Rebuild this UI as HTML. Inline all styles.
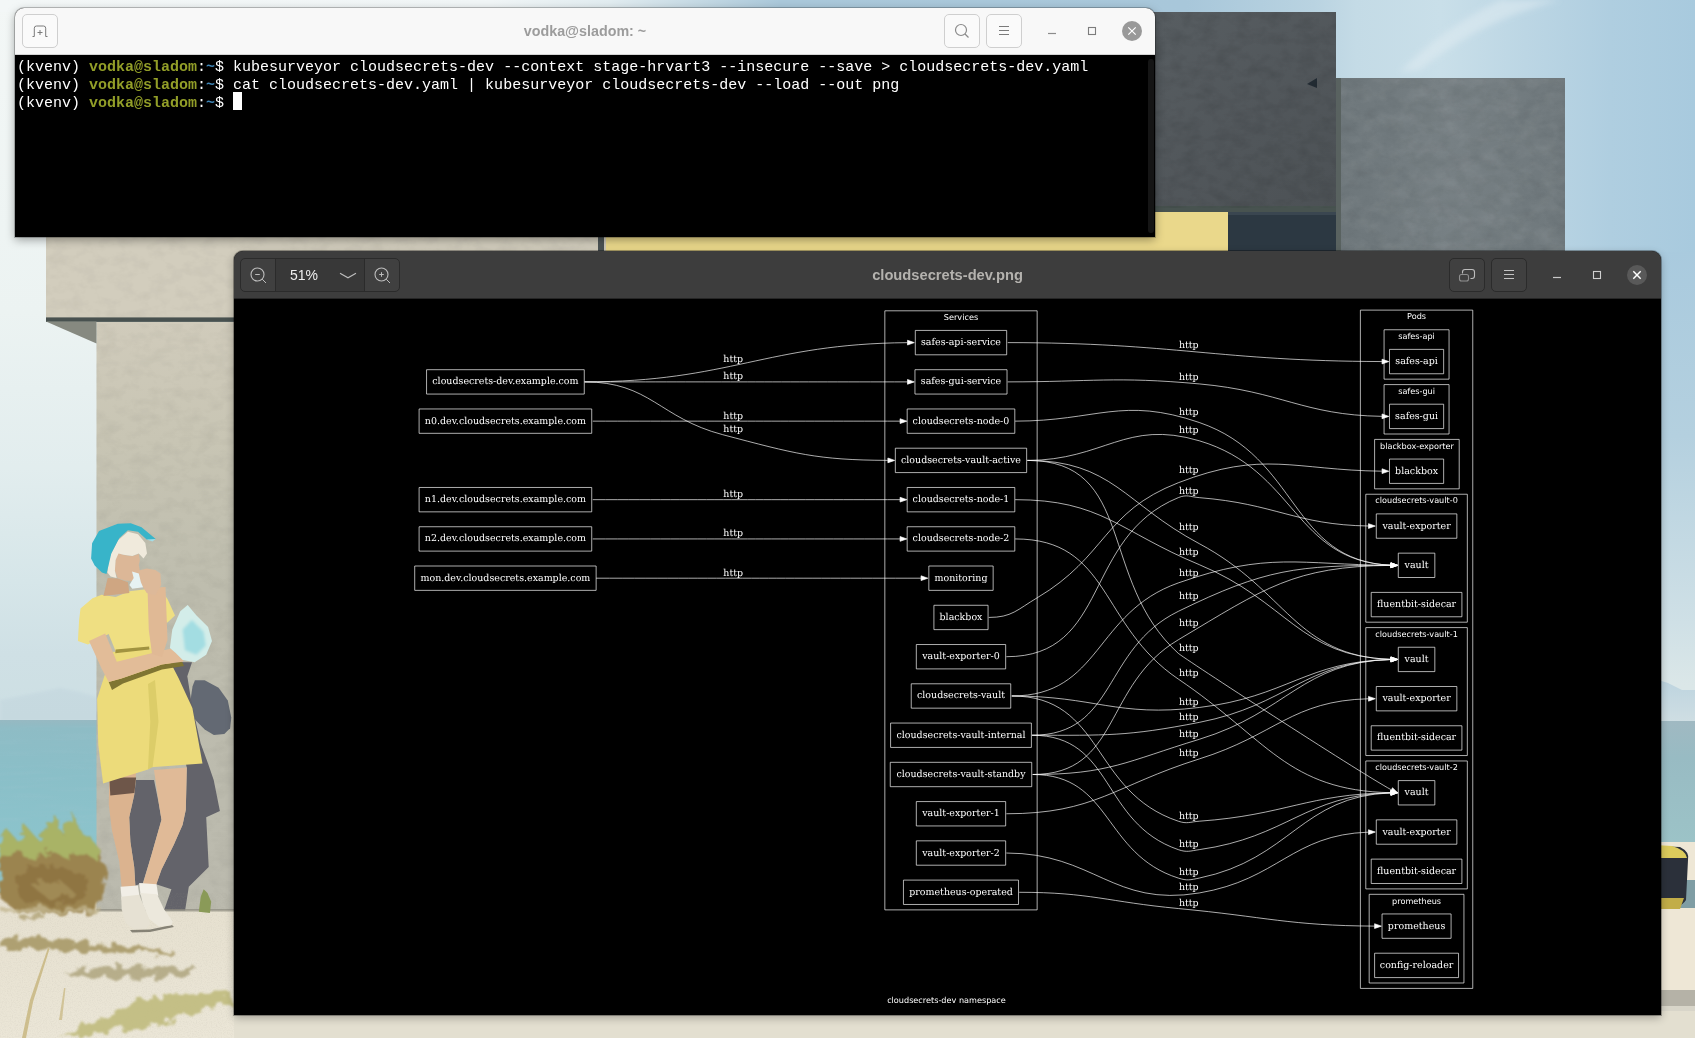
<!DOCTYPE html>
<html lang="en">
<head>
<meta charset="utf-8">
<title>Desktop</title>
<style>
html,body{margin:0;padding:0;}
body{width:1695px;height:1038px;overflow:hidden;position:relative;background:#dfeaee;font-family:"Liberation Sans",sans-serif;}
#wall{position:absolute;left:0;top:0;width:1695px;height:1038px;}
.win{position:absolute;box-sizing:border-box;}
.title,pre,.pct,#graph{will-change:transform;}
/* terminal */
#term{left:15px;top:8px;width:1140px;height:229px;border-radius:9px 9px 0 0;box-shadow:0 0 0 1px rgba(0,0,0,.22),0 3px 10px rgba(0,0,0,.35);background:#000;}
#term .hdr{position:absolute;left:0;top:0;width:100%;height:47px;background:#f8f8f8;border-radius:9px 9px 0 0;border-bottom:1px solid #d4d4d4;box-sizing:border-box;}
#term .title{position:absolute;left:0;right:0;top:15px;text-align:center;font-weight:bold;font-size:14.3px;color:#9c9c9c;}
.tbtn{position:absolute;top:6px;width:36px;height:34px;box-sizing:border-box;border:1px solid #cfcfcf;border-radius:5px;background:#fafafa;}
#term .body{position:absolute;left:1px;top:47px;right:0;bottom:0;background:#000;}
#term pre{margin:0;position:absolute;left:1px;top:4px;font-family:"Liberation Mono",monospace;font-size:15px;line-height:18px;color:#fff;letter-spacing:0px;white-space:pre;}
.sb{position:absolute;right:1px;top:4px;width:6px;bottom:4px;background:#151515;border-radius:3px;}
.u{color:#929e28;font-weight:bold;}
.p{color:#3f86b7;font-weight:bold;}
.cur{display:inline-block;width:9px;height:17.500px;background:#fff;vertical-align:top;position:relative;top:-3px;}
/* viewer */
#view{left:234px;top:251px;width:1427px;height:764px;border-radius:9px 9px 0 0;background:#000;box-shadow:0 0 0 1px rgba(0,0,0,.3),0 3px 9px rgba(0,0,0,.28);}
#view .hdr{position:absolute;left:0;top:0;width:100%;height:48px;background:#3d3d3d;border-radius:9px 9px 0 0;border-bottom:1px solid #262626;box-sizing:border-box;}
#view .title{position:absolute;left:0;right:0;top:16px;text-align:center;font-weight:bold;font-size:14.7px;color:#b4b2ae;}
.vbtn{position:absolute;top:7px;width:36px;height:34px;box-sizing:border-box;border:1px solid #2b2b2b;border-radius:5px;background:#404040;}
#zoomgrp{position:absolute;left:6px;top:7px;width:160px;height:34px;box-sizing:border-box;border:1px solid #2b2b2b;border-radius:5px;background:#404040;}
#zoomgrp .mid{position:absolute;left:34px;top:0;width:90px;height:32px;background:#383838;border-left:1px solid #2b2b2b;border-right:1px solid #2b2b2b;box-sizing:border-box;}
#zoomgrp .pct{position:absolute;left:14px;top:8px;font-size:14px;color:#eeeeee;}
#graph{position:absolute;left:0;top:47px;}
svg{display:block;}
</style>
</head>
<body>
<svg id="wall" width="1695" height="1038" viewBox="0 0 1695 1038">
<defs>
<linearGradient id="skyL" gradientUnits="userSpaceOnUse" x1="0" y1="0" x2="0" y2="1038"><stop offset="0" stop-color="#f3f7f6"/><stop offset=".3" stop-color="#ecf3f2"/><stop offset=".45" stop-color="#e2edee"/><stop offset=".56" stop-color="#d6e6e9"/><stop offset=".63" stop-color="#cfe0e5"/><stop offset=".69" stop-color="#cddfe3"/></linearGradient>
<linearGradient id="skyTop" x1="0" y1="0" x2="1" y2="0"><stop offset="0" stop-color="#f3f7f7"/><stop offset=".29" stop-color="#f0f5f6"/><stop offset=".36" stop-color="#e1ecf0"/><stop offset=".415" stop-color="#c3d8e3"/><stop offset=".46" stop-color="#aac8da"/><stop offset=".7" stop-color="#a8c7da"/><stop offset=".775" stop-color="#b9d3e1"/><stop offset=".8" stop-color="#c4dbe6"/><stop offset=".85" stop-color="#c9dfe9"/><stop offset=".9" stop-color="#bcd6e4"/><stop offset=".95" stop-color="#afcee0"/><stop offset="1" stop-color="#a8cade"/></linearGradient>
<linearGradient id="skyR" gradientUnits="userSpaceOnUse" x1="0" y1="0" x2="0" y2="1038"><stop offset="0" stop-color="#b6d3e2"/><stop offset=".24" stop-color="#a9cade"/><stop offset=".42" stop-color="#b4d0df"/><stop offset=".6" stop-color="#cfe0e6"/><stop offset=".66" stop-color="#dbe7e8"/></linearGradient>
<linearGradient id="seaL" gradientUnits="userSpaceOnUse" x1="0" y1="720" x2="0" y2="860"><stop offset="0" stop-color="#97b9c2"/><stop offset=".06" stop-color="#8ebcc5"/><stop offset=".4" stop-color="#8abfc8"/><stop offset="1" stop-color="#8cc5cd"/></linearGradient>
<linearGradient id="seaR" gradientUnits="userSpaceOnUse" x1="0" y1="721" x2="0" y2="843"><stop offset="0" stop-color="#a0b9c2"/><stop offset=".3" stop-color="#98bbc3"/><stop offset="1" stop-color="#9cc3c7"/></linearGradient>
<linearGradient id="mtn" gradientUnits="userSpaceOnUse" x1="0" y1="680" x2="0" y2="722"><stop offset="0" stop-color="#bdd4df"/><stop offset="1" stop-color="#cfdee3"/></linearGradient>
<linearGradient id="pil" x1="0" y1="0" x2="0" y2="1"><stop offset="0" stop-color="#d0cbbb"/><stop offset=".2" stop-color="#c8c5b4"/><stop offset=".45" stop-color="#bebdae"/><stop offset="1" stop-color="#bbbaae"/></linearGradient>
<linearGradient id="dk1" x1="0" y1="0" x2="1" y2="1"><stop offset="0" stop-color="#595f63"/><stop offset="1" stop-color="#4c5155"/></linearGradient>
<linearGradient id="dk2" x1="0" y1="0" x2="1" y2="0"><stop offset="0" stop-color="#6d767a"/><stop offset=".5" stop-color="#778084"/><stop offset="1" stop-color="#6f787c"/></linearGradient>
<linearGradient id="gnd" x1="0" y1="0" x2="0" y2="1"><stop offset="0" stop-color="#e6e0cf"/><stop offset="1" stop-color="#ebe6d7"/></linearGradient>
<filter id="b1" x="-10%" y="-10%" width="120%" height="120%"><feGaussianBlur stdDeviation=".7"/></filter>
<filter id="b2" x="-10%" y="-10%" width="120%" height="120%"><feGaussianBlur stdDeviation="1.6"/></filter>
<filter id="b3" x="-20%" y="-20%" width="140%" height="140%"><feGaussianBlur stdDeviation="3"/></filter>
<filter id="rough" x="-10%" y="-10%" width="120%" height="120%"><feTurbulence type="fractalNoise" baseFrequency=".09" numOctaves="3" seed="4" result="n"/><feDisplacementMap in="SourceGraphic" in2="n" scale="16"/><feGaussianBlur stdDeviation=".8"/></filter>
<filter id="mottle" x="0" y="0" width="100%" height="100%"><feTurbulence type="fractalNoise" baseFrequency=".06 .09" numOctaves="4" seed="11"/><feColorMatrix type="matrix" values="0 0 0 0 0  0 0 0 0 0  0 0 0 0 0  0 0 0 1.4 -.55"/></filter>
<filter id="mottleL" x="0" y="0" width="100%" height="100%"><feTurbulence type="fractalNoise" baseFrequency=".05 .07" numOctaves="4" seed="5"/><feColorMatrix type="matrix" values="0 0 0 0 1  0 0 0 0 1  0 0 0 0 1  0 0 0 1.4 -.55"/></filter>
<filter id="grain" x="0" y="0" width="100%" height="100%"><feTurbulence type="fractalNoise" baseFrequency=".8" numOctaves="2" seed="7"/><feColorMatrix type="matrix" values="0 0 0 0 .35  0 0 0 0 .33  0 0 0 0 .28  0 0 0 .9 -.38"/></filter>
<filter id="waves" x="0" y="0" width="100%" height="100%"><feTurbulence type="fractalNoise" baseFrequency=".02 .22" numOctaves="2" seed="3"/><feColorMatrix type="matrix" values="0 0 0 0 .36  0 0 0 0 .56  0 0 0 0 .63  0 0 0 1.2 -.5"/></filter>
</defs>
<!-- sky -->
<rect x="0" y="0" width="1695" height="1038" fill="url(#skyTop)"/>
<rect x="0" y="12" width="600" height="1026" fill="url(#skyL)"/>
<rect x="1650" y="252" width="45" height="786" fill="url(#skyR)"/>
<path d="M1420 70 Q1480 20 1560 0 L1500 0 Q1440 30 1400 72Z" fill="#e0ecf2" opacity=".55" filter="url(#b3)"/>
<!-- distant hills left -->
<path d="M0 700 L30 694 L60 688 L80 692 L100 698 L100 722 L0 722Z" fill="#bfd3dc" opacity=".45" filter="url(#b2)"/>
<!-- hills right -->
<path d="M1655 679 L1668 683 L1682 690 L1695 690 L1695 722 L1655 722Z" fill="url(#mtn)" filter="url(#b1)"/>
<!-- sea -->
<rect x="0" y="720" width="300" height="200" fill="url(#seaL)"/>
<rect x="0" y="726" width="110" height="130" filter="url(#waves)" opacity=".3"/>
<rect x="1655" y="726" width="40" height="116" filter="url(#waves)" opacity=".25"/>
<rect x="1566" y="721" width="129" height="122" fill="url(#seaR)"/>
<!-- ground -->
<rect x="0" y="893" width="1695" height="145" fill="url(#gnd)"/>
<rect x="1566" y="842" width="129" height="196" fill="#eee7d6"/>
<rect x="1680" y="880" width="15" height="28" fill="#7f9da4"/>
<rect x="1655" y="990" width="40" height="16" fill="#b5b2a7"/>
<rect x="1655" y="1006" width="40" height="32" fill="#d8d5c9"/>
<rect x="234" y="1011" width="1461" height="27" fill="#e3dfd0"/>
<!-- bench thing right -->
<path d="M1655 846 L1680 847 Q1690 852 1688 860 L1686 900 Q1680 910 1655 909Z" fill="#2b303a"/>
<path d="M1655 845 L1672 846 Q1686 850 1687 858 L1655 858Z" fill="#dccb5c"/>
<path d="M1655 898 L1684 898 L1680 909 L1655 909Z" fill="#c2ad48"/>
<!-- upper-right blocks -->
<rect x="1100" y="12" width="236" height="200" fill="url(#dk1)"/>
<rect x="1100" y="206" width="240" height="6" fill="#485350"/>
<rect x="1336" y="78" width="229" height="200" fill="url(#dk2)"/>
<rect x="1336" y="78" width="5" height="200" fill="#596260"/>
<polygon points="1307,84 1317,78 1317,88" fill="#232c34"/>
<rect x="1155" y="12" width="181" height="196" filter="url(#mottle)" opacity=".13"/>
<rect x="1341" y="79" width="224" height="175" filter="url(#mottleL)" opacity=".09"/>
<rect x="1341" y="79" width="224" height="175" filter="url(#mottle)" opacity=".08"/>
<rect x="600" y="212" width="628" height="60" fill="#ead88b"/>
<rect x="1228" y="212" width="108" height="60" fill="#2c3842"/>
<rect x="1228" y="212" width="108" height="3" fill="#3a4650"/>
<!-- left concrete -->
<rect x="46" y="200" width="560" height="118" fill="#d2cdbd"/>
<rect x="598" y="200" width="6" height="70" fill="#4d5557"/>
<rect x="96.500" y="322" width="200" height="588" fill="url(#pil)"/>
<rect x="46" y="317.400" width="260" height="4.500" fill="#48514f"/>
<polygon points="46,321.500 96.500,321.500 96.500,343.500" fill="#868980"/>
<rect x="96.500" y="324" width="140" height="586" filter="url(#mottle)" opacity=".06"/>
<rect x="46" y="237" width="560" height="80" filter="url(#mottle)" opacity=".05"/>
<!-- wall shadows -->
<g filter="url(#b1)">
<path d="M194.900 680.200 L204.700 680.200 L218.600 687.700 L227.800 700.500 L231.300 717.800 L230.100 728.200 L224.300 734 L213.900 735.100 L204.700 729.400 L195.400 720.100 L191.400 708.600 L190.800 698.200 L192.500 686.600Z" fill="#636973"/>
<path d="M170 662 L192 662.300 L187.300 676.200 L190.800 698.200 L195.400 720.100 L200.600 743.200 L208.200 764 L213.700 780 L219.900 811.100 L206.200 817.300 L208.700 867 L188.800 886.800 L185.100 910.400 L164 910.400 L171.400 889.300 L156 884.300 L161.500 869.400 L173.900 844.600 L182.600 824.700 L185.800 809.800 L186.800 767.600 L180 740 L170 700Z" fill="#63636a"/>
<path d="M136.100 780 L154 780 L159 804.800 L161.500 819.800 L151.600 854.500 L142.900 883.100 L135.400 885.600 L134.200 867 L130.400 842.100 L129.200 817.300 L134.200 794.900Z" fill="#63636a"/>
</g>
<rect x="96.500" y="909" width="140" height="2.500" fill="#8e8c80" opacity=".7" filter="url(#b1)"/>
<path d="M130 930 L150 929.500 L172 925 L174 927 L150 932 L132 932.500Z" fill="#5d5a50" opacity=".7" filter="url(#b1)"/>
<!-- ground texture -->
<rect x="0" y="893" width="234" height="145" filter="url(#grain)" opacity=".28"/>
<!-- bush -->
<g filter="url(#rough)">
<path d="M0 842 L8 830 L16 840 L26 826 L36 838 L46 828 L56 816 L62 834 L72 812 L80 832 L90 836 L99 850 L105 870 L102 900 L84 914 L18 912 L0 898Z" fill="#9b8450"/>
<path d="M0 842 L8 830 L16 840 L26 826 L36 838 L46 828 L56 816 L62 834 L72 812 L80 832 L90 836 L99 850 L98 862 L84 852 L70 860 L52 850 L36 860 L18 852 L0 862Z" fill="#a9b366"/>
<path d="M14 876 L40 864 L66 870 L88 878 L84 900 L50 906 L22 900Z" fill="#8f7443"/>
<path d="M30 884 L60 880 L74 892 L50 900Z" fill="#a08a55"/>
</g>
<!-- ground vegetation -->
<g filter="url(#rough)">
<path d="M0 939 L40 937 L80 943 L120 946 L174 951 L172 955 L100 952 L40 949 L0 949Z" fill="#a59560" opacity=".85"/>
<path d="M20 916 L45 915 L44 918 L20 919Z" fill="#a89868" opacity=".7"/>
<path d="M62 971 L120 966 L197 968 L190 976 L120 979 L80 977Z" fill="#aea47e" opacity=".85"/>
<path d="M128 1004 L165 996 L231 992 L232 1004 L190 1014 L150 1026 L60 1038 L90 1024Z" fill="#bdb978" opacity=".85"/>
<path d="M0 907 L40 909 L100 907 L100 911 L40 913 L0 912Z" fill="#c3b790" opacity=".8"/>
</g>
<path d="M22 1038 L30 1000 L48 948 L49.500 949 L33 1002 L26 1038Z" fill="#c2ae70" opacity=".7" filter="url(#b1)"/>
<path d="M59 1020 L64 988 L65.500 988 L62 1020Z" fill="#c2ae70" opacity=".6" filter="url(#b1)"/>
<path d="M198.800 911.700 L200.700 896.800 L203.700 889.300 L207.500 893 L211.200 901.700 L209.900 912.900Z" fill="#8a9a58" filter="url(#b1)"/>
<!-- person -->
<g filter="url(#b1)">
<path d="M109.300 772.500 L136.100 772.500 L134.200 794.900 L129.200 817.300 L130.400 842.100 L134.200 867 L135.400 886.800 L121.700 888.100 L119.300 862 L111.800 829.700 L108.800 804.800Z" fill="#dbb38f"/>
<path d="M154 770.100 L186.800 767.600 L185.800 809.800 L182.600 824.700 L173.900 844.600 L161.500 869.400 L156 885.600 L142.900 883.900 L151.600 854.500 L161.500 819.800 L159 804.800Z" fill="#e0ba97"/>
<path d="M109.300 777.500 L136.100 777.500 L134.400 792.900 L110.300 795.400Z" fill="#6e574a"/>
<path d="M120.500 886.800 L137.900 885.600 L139.600 897.300 L121.700 899.800Z" fill="#f1eee6"/>
<path d="M139.100 883.100 L156.500 884.300 L158.300 895.800 L140.600 894.800Z" fill="#f3f0e8"/>
<path d="M121.200 896.800 L139.100 894.800 L145.300 909.200 L150.300 924.100 L146.600 928.600 L134.200 929.100 L125.500 922.900 L121.700 909.200Z" fill="#e6e1d3"/>
<path d="M140.400 893 L157 894.300 L164 909.200 L172.700 921.600 L171.400 925.300 L159 926.600 L149.100 919.100 L142.900 904.200Z" fill="#ece8dc"/>
<path d="M112 652 L163 648 L178.500 677.900 L192.400 708 L202.500 763.500 L150.800 767.200 L148 769.500 L103.100 783.400 L98.300 745 L97.100 698.700 L107 668Z" fill="#ecdb7a"/>
<path d="M148 684 L155 680 L158.500 721.800 L152.600 766.900 L148 769.200 L150.300 721.800Z" fill="#dccd69"/>
<path d="M108.700 682.100 L121.400 678.400 L161.800 664.500 L182 661.500 L184 666 L162 669.500 L123 683.500 L112 690Z" fill="#7f7433"/>
<path d="M92.500 598.200 L101.700 594.700 L115.600 597 L129.500 591.200 L148 588.900 L159.500 587.700 L167.600 599.300 L175 615.500 L166.900 622.900 L161.800 615.500 L163 636.300 L161.800 652.500 L148 647.900 L115.600 651.300 L108.700 634 L87.900 644.400 L77.900 640.900 L79.100 620.100 L80.500 608.600Z" fill="#efdf82"/>
<path d="M115.600 649.500 L149.100 646.500 L149.300 649.500 L115.300 653.300Z" fill="#a19340"/>
<path d="M89 640.900 L105.200 633.500 L116.800 661.700 L159.500 651.300 L175.700 647.400 L186.100 656 L182.700 661.700 L161.800 664.500 L121.400 678.400 L108.700 682.100 L101.700 668.700Z" fill="#e2bc98"/>
<path d="M147.500 588 L165.500 587 L167.500 640 L162 657 L152 654 L148.800 630Z" fill="#e0b995"/>
<path d="M107.700 577.900 L117.800 578.600 L127.900 582.300 L129.400 593.100 L103.400 596Z" fill="#cfa682"/>
<path d="M117.800 552.800 L123.600 555.100 L132.300 556.200 L138.800 554.100 L139.800 559.900 L138.800 564.900 L139.800 570.700 L138 575.800 L133 581.100 L125 580.500 L117.800 577.900 L114.900 570.700 L115.500 559.900Z" fill="#dcb797"/>
<path d="M138 570.700 L146.700 568.500 L155.400 570 L160.400 573.600 L161.200 585.100 L155.400 595.300 L146.700 593.100 L141.600 585.100 L139.200 577.900Z" fill="#ddb999"/>
<path d="M132 571.400 L138.800 573.600 L140.900 582.300 L143.100 587.300 L132.300 588.800 L129.400 585.100 L133.700 577.900Z" fill="#e6f2f3"/>
<path d="M107.400 572.400 L109.100 557.700 L117.800 540.600 L127.900 531.700 L138 534.300 L145.300 542.900 L147 553.400 L143.500 558.400 L138.800 553.400 L132.300 556 L123.600 554.800 L118.500 553.400 L115.600 559.900 L114.900 570.700 L116.600 577.900 L110.600 576.500Z" fill="#f0eadc"/>
<path d="M91.100 558.400 L92.100 543.200 L99 531 L117.800 523.700 L130.800 523.300 L141.600 527.300 L155.700 538.900 L152.500 540.600 L146.700 539.600 L138 531.700 L127.900 530.200 L119.200 538.200 L111.300 553.400 L106.500 573.900 L101.900 572.400 L94.700 565.600Z" fill="#38b4c9"/>
<path d="M146.700 539.600 L155.700 538.900 L152.500 541.500Z" fill="#a5dde6"/>
<path d="M169.900 647.900 L172.300 629.400 L180.300 611.300 L187.700 605.100 L196.500 615.500 L208.100 627.100 L212 640.900 L206.200 654.800 L194.700 662.200 L182.700 659.900 L175.700 652.900Z" fill="#d3ede9"/>
<path d="M182.700 629.400 L191.900 620.100 L203.500 631.700 L205.800 645.500 L196.500 654.800 L185 650.200Z" fill="#a3dde2" filter="url(#b2)"/>
</g>
</svg>

<div id="term" class="win">
  <div class="hdr">
    <div class="tbtn" style="left:7px"><svg width="34" height="32" viewBox="0 0 34 32"><path d="M9.500 21.500h1.800v-8.300a2.200 2.200 0 0 1 2.200-2.200h7a2.200 2.200 0 0 1 2.200 2.200v8.300h1.800" fill="none" stroke="#7a7a7a" stroke-width="1"/><path d="M14.500 17.500h5M17 15v5" fill="none" stroke="#7a7a7a" stroke-width="1"/></svg></div>
    <div class="title">vodka@sladom: ~</div>
    <div class="tbtn" style="left:929px"><svg width="34" height="32" viewBox="0 0 34 32"><circle cx="16" cy="15" r="5.5" fill="none" stroke="#8a8a8a" stroke-width="1.2"/><path d="M20 19l3.5 3.5" stroke="#8a8a8a" stroke-width="1.2"/></svg></div>
    <div class="tbtn" style="left:971px"><svg width="34" height="32" viewBox="0 0 34 32"><path d="M12 11.5h10M12 15.5h10M12 19.5h10" stroke="#7a7a7a" stroke-width="1.1"/></svg></div>
    <svg style="position:absolute;left:1020px;top:6px" width="120" height="34" viewBox="0 0 120 34"><path d="M13 19.500h8" stroke="#8c8c8c" stroke-width="1.200"/><rect x="53.500" y="13.500" width="7" height="7" fill="none" stroke="#7c7c7c" stroke-width="1.1"/><circle cx="97" cy="17" r="10" fill="#999999"/><path d="M93.300 13.300l7.400 7.400M100.700 13.300l-7.400 7.400" stroke="#fff" stroke-width="1.200"/></svg>
  </div>
  <div class="body"><div class="sb"></div><pre>(kvenv) <span class="u">vodka@sladom</span>:<span class="p">~</span>$ kubesurveyor cloudsecrets-dev --context stage-hrvart3 --insecure --save &gt; cloudsecrets-dev.yaml
(kvenv) <span class="u">vodka@sladom</span>:<span class="p">~</span>$ cat cloudsecrets-dev.yaml | kubesurveyor cloudsecrets-dev --load --out png
(kvenv) <span class="u">vodka@sladom</span>:<span class="p">~</span>$ <span class="cur"></span></pre></div>
</div>
<div id="view" class="win">
  <div class="hdr">
    <div id="zoomgrp">
      <div class="mid"><span class="pct">51%</span><svg style="position:absolute;left:63px;top:13px" width="18" height="8" viewBox="0 0 18 8"><path d="M1 1.2l8 4.6 8-4.6" fill="none" stroke="#bdbdbd" stroke-width="1.1"/></svg></div>
      <svg style="position:absolute;left:8px;top:7px" width="20" height="20" viewBox="0 0 20 20"><circle cx="8.500" cy="8.500" r="6.500" fill="none" stroke="#bdbdbd" stroke-width="1.100"/><path d="M6.200 8.500h4.600M13.200 13.200l3.800 3.800" stroke="#bdbdbd" stroke-width="1"/></svg>
      <svg style="position:absolute;left:132px;top:7px" width="20" height="20" viewBox="0 0 20 20"><circle cx="8.500" cy="8.500" r="6.500" fill="none" stroke="#bdbdbd" stroke-width="1.100"/><path d="M6.200 8.500h4.600M8.500 6.200v4.600M13.200 13.200l3.800 3.800" stroke="#bdbdbd" stroke-width="1"/></svg>
    </div>
    <div class="title">cloudsecrets-dev.png</div>
    <div class="vbtn" style="left:1215px"><svg width="34" height="32" viewBox="0 0 34 32"><path d="M12.500 14.500v-1.500a2.500 2.500 0 0 1 2.500-2.500h7a2.500 2.500 0 0 1 2.500 2.500v4a2.500 2.500 0 0 1-2.500 2.500h-1.500" fill="none" stroke="#bdbdbd" stroke-width="1.100"/><rect x="9.5" y="15.5" width="9" height="6.5" rx="2" fill="none" stroke="#8f8f8f" stroke-width="1.1"/></svg></div>
    <div class="vbtn" style="left:1257px"><svg width="34" height="32" viewBox="0 0 34 32"><path d="M12 11.5h10M12 15.5h10M12 19.5h10" stroke="#c4c4c4" stroke-width="1.1"/></svg></div>
    <svg style="position:absolute;left:1300px;top:7px" width="125" height="34" viewBox="0 0 125 34"><path d="M19 19.5h8" stroke="#c9c9c9" stroke-width="1.2"/><rect x="59.5" y="13.5" width="7" height="7" fill="none" stroke="#d0d0d0" stroke-width="1.1"/><circle cx="103" cy="17" r="10" fill="#595959"/><path d="M99.300 13.300l7.400 7.400M106.700 13.300l-7.400 7.400" stroke="#fff" stroke-width="1.450"/></svg>
  </div>
  <svg id="graph" text-rendering="geometricPrecision" style="position:absolute;left:177.76px;top:50.80px" width="1068.88" height="708.75" viewBox="0 0 1579 1047">
<g id="graph0" class="graph" transform="scale(1 1) rotate(0) translate(4 1043)">
<text text-anchor="middle" x="785.5" y="-7.4" font-family="DejaVu Sans, Liberation Sans, sans-serif" font-size="12.00" fill="white">cloudsecrets-dev namespace</text>
<g id="clust1" class="cluster">
<polygon fill="black" stroke="white" points="694.5,-145 694.5,-1030 919.5,-1030 919.5,-145 694.5,-145"/>
<text text-anchor="middle" x="807" y="-1016.4" font-family="DejaVu Sans, Liberation Sans, sans-serif" font-size="12.00" fill="white">Services</text>
</g>
<g id="clust2" class="cluster">
<polygon fill="black" stroke="white" points="1397,-29 1397,-1031 1563,-1031 1563,-29 1397,-29"/>
<text text-anchor="middle" x="1480" y="-1017.4" font-family="DejaVu Sans, Liberation Sans, sans-serif" font-size="12.00" fill="white">Pods</text>
</g>
<g id="clust3" class="cluster">
<polygon fill="black" stroke="white" points="1432,-929 1432,-1002 1528,-1002 1528,-929 1432,-929"/>
<text text-anchor="middle" x="1480" y="-988.4" font-family="DejaVu Sans, Liberation Sans, sans-serif" font-size="12.00" fill="white">safes-api</text>
</g>
<g id="clust4" class="cluster">
<polygon fill="black" stroke="white" points="1432,-848 1432,-921 1528,-921 1528,-848 1432,-848"/>
<text text-anchor="middle" x="1480" y="-907.4" font-family="DejaVu Sans, Liberation Sans, sans-serif" font-size="12.00" fill="white">safes-gui</text>
</g>
<g id="clust5" class="cluster">
<polygon fill="black" stroke="white" points="1418,-767 1418,-840 1543,-840 1543,-767 1418,-767"/>
<text text-anchor="middle" x="1480.5" y="-826.4" font-family="DejaVu Sans, Liberation Sans, sans-serif" font-size="12.00" fill="white">blackbox-exporter</text>
</g>
<g id="clust6" class="cluster">
<polygon fill="black" stroke="white" points="1405,-570 1405,-759 1555,-759 1555,-570 1405,-570"/>
<text text-anchor="middle" x="1480" y="-745.4" font-family="DejaVu Sans, Liberation Sans, sans-serif" font-size="12.00" fill="white">cloudsecrets-vault-0</text>
</g>
<g id="clust7" class="cluster">
<polygon fill="black" stroke="white" points="1405,-373 1405,-562 1555,-562 1555,-373 1405,-373"/>
<text text-anchor="middle" x="1480" y="-548.4" font-family="DejaVu Sans, Liberation Sans, sans-serif" font-size="12.00" fill="white">cloudsecrets-vault-1</text>
</g>
<g id="clust8" class="cluster">
<polygon fill="black" stroke="white" points="1405,-176 1405,-365 1555,-365 1555,-176 1405,-176"/>
<text text-anchor="middle" x="1480" y="-351.4" font-family="DejaVu Sans, Liberation Sans, sans-serif" font-size="12.00" fill="white">cloudsecrets-vault-2</text>
</g>
<g id="clust9" class="cluster">
<polygon fill="black" stroke="white" points="1410,-37 1410,-168 1550,-168 1550,-37 1410,-37"/>
<text text-anchor="middle" x="1480" y="-154.4" font-family="DejaVu Sans, Liberation Sans, sans-serif" font-size="12.00" fill="white">prometheus</text>
</g>
<g id="node1" class="node">
<polygon fill="none" stroke="white" points="250.5,-943 17.5,-943 17.5,-907 250.5,-907 250.5,-943"/>
<text text-anchor="middle" x="134" y="-921.3" font-family="DejaVu Serif, Liberation Serif, serif" font-size="14.00" fill="white">cloudsecrets-dev.example.com</text>
</g>
<g id="node2" class="node">
<polygon fill="none" stroke="white" points="874.5,-1001 739.5,-1001 739.5,-965 874.5,-965 874.5,-1001"/>
<text text-anchor="middle" x="807" y="-979.3" font-family="DejaVu Serif, Liberation Serif, serif" font-size="14.00" fill="white">safes-api-service</text>
</g>
<g id="edge1" class="edge">
<path fill="none" stroke="white" d="M251,-925C465.57,-925 518.39,-981.2 727.9,-982.96"/>
<polygon fill="white" stroke="white" points="727.99,-986.46 738,-983 728.01,-979.46 727.99,-986.46"/>
<text text-anchor="middle" x="470.5" y="-953.8" font-family="DejaVu Serif, Liberation Serif, serif" font-size="14.00" fill="white">http</text>
</g>
<g id="node3" class="node">
<polygon fill="none" stroke="white" points="875,-943 739,-943 739,-907 875,-907 875,-943"/>
<text text-anchor="middle" x="807" y="-921.3" font-family="DejaVu Serif, Liberation Serif, serif" font-size="14.00" fill="white">safes-gui-service</text>
</g>
<g id="edge2" class="edge">
<path fill="none" stroke="white" d="M251,-925C464.06,-925 519.82,-925 727.97,-925"/>
<polygon fill="white" stroke="white" points="728,-928.5 738,-925 728,-921.5 728,-928.5"/>
<text text-anchor="middle" x="470.5" y="-928.8" font-family="DejaVu Serif, Liberation Serif, serif" font-size="14.00" fill="white">http</text>
</g>
<g id="node4" class="node">
<polygon fill="none" stroke="white" points="904,-827 710,-827 710,-791 904,-791 904,-827"/>
<text text-anchor="middle" x="807" y="-805.3" font-family="DejaVu Serif, Liberation Serif, serif" font-size="14.00" fill="white">cloudsecrets-vault-active</text>
</g>
<g id="edge3" class="edge">
<path fill="none" stroke="white" d="M251,-925C348.07,-925 361.12,-871.66 455,-847 562.06,-818.88 593,-809.56 698.86,-809.03"/>
<polygon fill="white" stroke="white" points="699.01,-812.52 709,-809 698.99,-805.52 699.01,-812.52"/>
<text text-anchor="middle" x="470.5" y="-850.8" font-family="DejaVu Serif, Liberation Serif, serif" font-size="14.00" fill="white">http</text>
</g>
<g id="node23" class="node">
<polygon fill="none" stroke="white" points="1520,-973 1440,-973 1440,-937 1520,-937 1520,-973"/>
<text text-anchor="middle" x="1480" y="-951.3" font-family="DejaVu Serif, Liberation Serif, serif" font-size="14.00" fill="white">safes-api</text>
</g>
<g id="edge25" class="edge">
<path fill="none" stroke="white" d="M876,-983C1123.11,-983 1186.74,-955.76 1428.83,-955.02"/>
<polygon fill="white" stroke="white" points="1429.01,-958.52 1439,-955 1428.99,-951.52 1429.01,-958.52"/>
<text text-anchor="middle" x="1143.5" y="-974.8" font-family="DejaVu Serif, Liberation Serif, serif" font-size="14.00" fill="white">http</text>
</g>
<g id="node24" class="node">
<polygon fill="none" stroke="white" points="1520,-892 1440,-892 1440,-856 1520,-856 1520,-892"/>
<text text-anchor="middle" x="1480" y="-870.3" font-family="DejaVu Serif, Liberation Serif, serif" font-size="14.00" fill="white">safes-gui</text>
</g>
<g id="edge26" class="edge">
<path fill="none" stroke="white" d="M876,-925C1001.78,-925 1033.73,-933.33 1159,-922 1281.31,-910.94 1311.14,-875.98 1428.86,-874.08"/>
<polygon fill="white" stroke="white" points="1429.03,-877.58 1439,-874 1428.97,-870.58 1429.03,-877.58"/>
<text text-anchor="middle" x="1143.5" y="-927.8" font-family="DejaVu Serif, Liberation Serif, serif" font-size="14.00" fill="white">http</text>
</g>
<g id="node15" class="node">
<polygon fill="none" stroke="white" points="1507,-672 1453,-672 1453,-636 1507,-636 1507,-672"/>
<text text-anchor="middle" x="1480" y="-650.3" font-family="DejaVu Serif, Liberation Serif, serif" font-size="14.00" fill="white">vault</text>
</g>
<g id="edge15" class="edge">
<path fill="none" stroke="white" d="M905,-809C1018.62,-809 1050.08,-870.34 1159,-838 1303.1,-795.21 1298.52,-660.25 1441.88,-654.21"/>
<polygon fill="white" stroke="white" points="1442.07,-657.71 1452,-654 1441.93,-650.71 1442.07,-657.71"/>
<text text-anchor="middle" x="1143.5" y="-848.8" font-family="DejaVu Serif, Liberation Serif, serif" font-size="14.00" fill="white">http</text>
</g>
<g id="node16" class="node">
<polygon fill="none" stroke="white" points="1507,-533 1453,-533 1453,-497 1507,-497 1507,-533"/>
<text text-anchor="middle" x="1480" y="-511.3" font-family="DejaVu Serif, Liberation Serif, serif" font-size="14.00" fill="white">vault</text>
</g>
<g id="edge16" class="edge">
<path fill="none" stroke="white" d="M905,-809C1030.43,-809 1048.31,-744.99 1159,-686 1288.94,-616.75 1300.73,-519.68 1441.63,-515.16"/>
<polygon fill="white" stroke="white" points="1442.06,-518.66 1452,-515 1441.95,-511.66 1442.06,-518.66"/>
<text text-anchor="middle" x="1143.5" y="-706.8" font-family="DejaVu Serif, Liberation Serif, serif" font-size="14.00" fill="white">http</text>
</g>
<g id="node17" class="node">
<polygon fill="none" stroke="white" points="1507,-336 1453,-336 1453,-300 1507,-300 1507,-336"/>
<text text-anchor="middle" x="1480" y="-314.3" font-family="DejaVu Serif, Liberation Serif, serif" font-size="14.00" fill="white">vault</text>
</g>
<g id="edge17" class="edge">
<path fill="none" stroke="white" d="M905,-809C1065.83,-809 1008.86,-632.04 1128,-524 1135.21,-517.47 1389.94,-351.47 1442.76,-322.34"/>
<polygon fill="white" stroke="white" points="1444.44,-325.42 1452,-318 1441.46,-319.09 1444.44,-325.42"/>
<text text-anchor="middle" x="1143.5" y="-527.8" font-family="DejaVu Serif, Liberation Serif, serif" font-size="14.00" fill="white">http</text>
</g>
<g id="node5" class="node">
<polygon fill="none" stroke="white" points="261.5,-885 6.5,-885 6.5,-849 261.5,-849 261.5,-885"/>
<text text-anchor="middle" x="134" y="-863.3" font-family="DejaVu Serif, Liberation Serif, serif" font-size="14.00" fill="white">n0.dev.cloudsecrets.example.com</text>
</g>
<g id="node6" class="node">
<polygon fill="none" stroke="white" points="886.5,-885 727.5,-885 727.5,-849 886.5,-849 886.5,-885"/>
<text text-anchor="middle" x="807" y="-863.3" font-family="DejaVu Serif, Liberation Serif, serif" font-size="14.00" fill="white">cloudsecrets-node-0</text>
</g>
<g id="edge4" class="edge">
<path fill="none" stroke="white" d="M263,-867C465.8,-867 519.02,-867 716.86,-867"/>
<polygon fill="white" stroke="white" points="717,-870.5 727,-867 717,-863.5 717,-870.5"/>
<text text-anchor="middle" x="470.5" y="-870.8" font-family="DejaVu Serif, Liberation Serif, serif" font-size="14.00" fill="white">http</text>
</g>
<g id="edge9" class="edge">
<path fill="none" stroke="white" d="M887,-867C1007.89,-867 1044.63,-904.19 1159,-865 1307.55,-814.1 1292.28,-660.78 1441.9,-654.22"/>
<polygon fill="white" stroke="white" points="1442.08,-657.71 1452,-654 1441.93,-650.72 1442.08,-657.71"/>
<text text-anchor="middle" x="1143.5" y="-875.8" font-family="DejaVu Serif, Liberation Serif, serif" font-size="14.00" fill="white">http</text>
</g>
<g id="node7" class="node">
<polygon fill="none" stroke="white" points="261.5,-769 6.5,-769 6.5,-733 261.5,-733 261.5,-769"/>
<text text-anchor="middle" x="134" y="-747.3" font-family="DejaVu Serif, Liberation Serif, serif" font-size="14.00" fill="white">n1.dev.cloudsecrets.example.com</text>
</g>
<g id="node8" class="node">
<polygon fill="none" stroke="white" points="886.5,-769 727.5,-769 727.5,-733 886.5,-733 886.5,-769"/>
<text text-anchor="middle" x="807" y="-747.3" font-family="DejaVu Serif, Liberation Serif, serif" font-size="14.00" fill="white">cloudsecrets-node-1</text>
</g>
<g id="edge5" class="edge">
<path fill="none" stroke="white" d="M263,-751C465.8,-751 519.02,-751 716.86,-751"/>
<polygon fill="white" stroke="white" points="717,-754.5 727,-751 717,-747.5 717,-754.5"/>
<text text-anchor="middle" x="470.5" y="-754.8" font-family="DejaVu Serif, Liberation Serif, serif" font-size="14.00" fill="white">http</text>
</g>
<g id="edge10" class="edge">
<path fill="none" stroke="white" d="M887,-751C1015.2,-751 1040.55,-704.04 1159,-655 1289.09,-601.14 1306.86,-519.12 1441.66,-515.15"/>
<polygon fill="white" stroke="white" points="1442.05,-518.64 1452,-515 1441.95,-511.65 1442.05,-518.64"/>
<text text-anchor="middle" x="1143.5" y="-669.8" font-family="DejaVu Serif, Liberation Serif, serif" font-size="14.00" fill="white">http</text>
</g>
<g id="node9" class="node">
<polygon fill="none" stroke="white" points="261.5,-711 6.5,-711 6.5,-675 261.5,-675 261.5,-711"/>
<text text-anchor="middle" x="134" y="-689.3" font-family="DejaVu Serif, Liberation Serif, serif" font-size="14.00" fill="white">n2.dev.cloudsecrets.example.com</text>
</g>
<g id="node10" class="node">
<polygon fill="none" stroke="white" points="886.5,-711 727.5,-711 727.5,-675 886.5,-675 886.5,-711"/>
<text text-anchor="middle" x="807" y="-689.3" font-family="DejaVu Serif, Liberation Serif, serif" font-size="14.00" fill="white">cloudsecrets-node-2</text>
</g>
<g id="edge6" class="edge">
<path fill="none" stroke="white" d="M263,-693C465.8,-693 519.02,-693 716.86,-693"/>
<polygon fill="white" stroke="white" points="717,-696.5 727,-693 717,-689.5 717,-696.5"/>
<text text-anchor="middle" x="470.5" y="-696.8" font-family="DejaVu Serif, Liberation Serif, serif" font-size="14.00" fill="white">http</text>
</g>
<g id="edge11" class="edge">
<path fill="none" stroke="white" d="M887,-693C1028.2,-693 1010.99,-565.03 1128,-486 1259.53,-397.17 1288.57,-321.32 1441.73,-318.11"/>
<polygon fill="white" stroke="white" points="1442.04,-321.6 1452,-318 1441.96,-314.6 1442.04,-321.6"/>
<text text-anchor="middle" x="1143.5" y="-489.8" font-family="DejaVu Serif, Liberation Serif, serif" font-size="14.00" fill="white">http</text>
</g>
<g id="node11" class="node">
<polygon fill="none" stroke="white" points="268,-653 0,-653 0,-617 268,-617 268,-653"/>
<text text-anchor="middle" x="134" y="-631.3" font-family="DejaVu Serif, Liberation Serif, serif" font-size="14.00" fill="white">mon.dev.cloudsecrets.example.com</text>
</g>
<g id="node12" class="node">
<polygon fill="none" stroke="white" points="854.5,-653 759.5,-653 759.5,-617 854.5,-617 854.5,-653"/>
<text text-anchor="middle" x="807" y="-631.3" font-family="DejaVu Serif, Liberation Serif, serif" font-size="14.00" fill="white">monitoring</text>
</g>
<g id="edge7" class="edge">
<path fill="none" stroke="white" d="M268,-635C482.38,-635 538.48,-635 747.91,-635"/>
<polygon fill="white" stroke="white" points="748,-638.5 758,-635 748,-631.5 748,-638.5"/>
<text text-anchor="middle" x="470.5" y="-638.8" font-family="DejaVu Serif, Liberation Serif, serif" font-size="14.00" fill="white">http</text>
</g>
<g id="node13" class="node">
<polygon fill="none" stroke="white" points="847,-595 767,-595 767,-559 847,-559 847,-595"/>
<text text-anchor="middle" x="807" y="-573.3" font-family="DejaVu Serif, Liberation Serif, serif" font-size="14.00" fill="white">blackbox</text>
</g>
<g id="node14" class="node">
<polygon fill="none" stroke="white" points="1520,-811 1440,-811 1440,-775 1520,-775 1520,-811"/>
<text text-anchor="middle" x="1480" y="-789.3" font-family="DejaVu Serif, Liberation Serif, serif" font-size="14.00" fill="white">blackbox</text>
</g>
<g id="edge8" class="edge">
<path fill="none" stroke="white" d="M848,-577C882.29,-577 889.99,-588.53 919.5,-606 1022.38,-666.93 1016.5,-732.84 1128,-776 1253.82,-824.7 1298.31,-794.62 1428.64,-793.06"/>
<polygon fill="white" stroke="white" points="1429.02,-796.56 1439,-793 1428.98,-789.56 1429.02,-796.56"/>
<text text-anchor="middle" x="1143.5" y="-789.8" font-family="DejaVu Serif, Liberation Serif, serif" font-size="14.00" fill="white">http</text>
</g>
<g id="node18" class="node">
<polygon fill="none" stroke="white" points="880.5,-479 733.5,-479 733.5,-443 880.5,-443 880.5,-479"/>
<text text-anchor="middle" x="807" y="-457.3" font-family="DejaVu Serif, Liberation Serif, serif" font-size="14.00" fill="white">cloudsecrets-vault</text>
</g>
<g id="edge12" class="edge">
<path fill="none" stroke="white" d="M882,-461C1014.15,-461 1003.34,-584.15 1128,-628 1260.95,-674.77 1305.37,-655.03 1441.6,-654.04"/>
<polygon fill="white" stroke="white" points="1442.01,-657.54 1452,-654 1441.99,-650.54 1442.01,-657.54"/>
<text text-anchor="middle" x="1143.5" y="-638.8" font-family="DejaVu Serif, Liberation Serif, serif" font-size="14.00" fill="white">http</text>
</g>
<g id="edge13" class="edge">
<path fill="none" stroke="white" d="M882,-461C1005.34,-461 1036.53,-429.37 1159,-444 1288.67,-459.49 1316.62,-512.23 1442,-514.89"/>
<polygon fill="white" stroke="white" points="1441.96,-518.39 1452,-515 1442.04,-511.4 1441.96,-518.39"/>
<text text-anchor="middle" x="1143.5" y="-447.8" font-family="DejaVu Serif, Liberation Serif, serif" font-size="14.00" fill="white">http</text>
</g>
<g id="edge14" class="edge">
<path fill="none" stroke="white" d="M882,-461C1018.8,-461 998.25,-319.34 1128,-276 1141.07,-271.63 1145.26,-275.02 1159,-276 1286.76,-285.11 1318.78,-316.29 1441.8,-317.93"/>
<polygon fill="white" stroke="white" points="1441.98,-321.43 1452,-318 1442.02,-314.43 1441.98,-321.43"/>
<text text-anchor="middle" x="1143.5" y="-279.8" font-family="DejaVu Serif, Liberation Serif, serif" font-size="14.00" fill="white">http</text>
</g>
<g id="node19" class="node">
<polygon fill="none" stroke="white" points="911,-421 703,-421 703,-385 911,-385 911,-421"/>
<text text-anchor="middle" x="807" y="-399.3" font-family="DejaVu Serif, Liberation Serif, serif" font-size="14.00" fill="white">cloudsecrets-vault-internal</text>
</g>
<g id="edge18" class="edge">
<path fill="none" stroke="white" d="M912,-403C1037.82,-403 1014.97,-530.72 1128,-586 1257.08,-649.13 1302.72,-653.81 1441.82,-653.99"/>
<polygon fill="white" stroke="white" points="1442,-657.49 1452,-654 1442,-650.49 1442,-657.49"/>
<text text-anchor="middle" x="1143.5" y="-603.8" font-family="DejaVu Serif, Liberation Serif, serif" font-size="14.00" fill="white">http</text>
</g>
<g id="edge19" class="edge">
<path fill="none" stroke="white" d="M912,-403C1022.1,-403 1050.92,-400.98 1159,-422 1289.71,-447.42 1314.17,-511.63 1441.81,-514.87"/>
<polygon fill="white" stroke="white" points="1441.96,-518.37 1452,-515 1442.04,-511.37 1441.96,-518.37"/>
<text text-anchor="middle" x="1143.5" y="-425.8" font-family="DejaVu Serif, Liberation Serif, serif" font-size="14.00" fill="white">http</text>
</g>
<g id="edge20" class="edge">
<path fill="none" stroke="white" d="M912,-403C1033.89,-403 1012.76,-273.72 1128,-234 1141.03,-229.51 1145.36,-232.08 1159,-234 1289.74,-252.37 1315.27,-314.72 1441.89,-317.88"/>
<polygon fill="white" stroke="white" points="1441.96,-321.38 1452,-318 1442.04,-314.38 1441.96,-321.38"/>
<text text-anchor="middle" x="1143.5" y="-237.8" font-family="DejaVu Serif, Liberation Serif, serif" font-size="14.00" fill="white">http</text>
</g>
<g id="node20" class="node">
<polygon fill="none" stroke="white" points="911.5,-363 702.5,-363 702.5,-327 911.5,-327 911.5,-363"/>
<text text-anchor="middle" x="807" y="-341.3" font-family="DejaVu Serif, Liberation Serif, serif" font-size="14.00" fill="white">cloudsecrets-vault-standby</text>
</g>
<g id="edge21" class="edge">
<path fill="none" stroke="white" d="M913,-345C1043.2,-345 1016.12,-477.39 1128,-544 1255.73,-620.05 1298.03,-652.53 1441.92,-653.95"/>
<polygon fill="white" stroke="white" points="1441.98,-657.45 1452,-654 1442.02,-650.45 1441.98,-657.45"/>
<text text-anchor="middle" x="1143.5" y="-564.8" font-family="DejaVu Serif, Liberation Serif, serif" font-size="14.00" fill="white">http</text>
</g>
<g id="edge22" class="edge">
<path fill="none" stroke="white" d="M913,-345C1024.75,-345 1052.1,-364.45 1159,-397 1290.02,-436.9 1310.65,-511.26 1441.93,-514.86"/>
<polygon fill="white" stroke="white" points="1441.95,-518.36 1452,-515 1442.05,-511.36 1441.95,-518.36"/>
<text text-anchor="middle" x="1143.5" y="-400.8" font-family="DejaVu Serif, Liberation Serif, serif" font-size="14.00" fill="white">http</text>
</g>
<g id="edge23" class="edge">
<path fill="none" stroke="white" d="M913,-345C1030.28,-345 1016.28,-227.69 1128,-192 1141.12,-187.81 1145.51,-189.22 1159,-192 1294.45,-219.89 1309.57,-313.28 1441.85,-317.83"/>
<polygon fill="white" stroke="white" points="1441.94,-321.33 1452,-318 1442.06,-314.33 1441.94,-321.33"/>
<text text-anchor="middle" x="1143.5" y="-195.8" font-family="DejaVu Serif, Liberation Serif, serif" font-size="14.00" fill="white">http</text>
</g>
<g id="node21" class="node">
<polygon fill="none" stroke="white" points="892,-189 722,-189 722,-153 892,-153 892,-189"/>
<text text-anchor="middle" x="807" y="-167.3" font-family="DejaVu Serif, Liberation Serif, serif" font-size="14.00" fill="white">prometheus-operated</text>
</g>
<g id="node22" class="node">
<polygon fill="none" stroke="white" points="1531,-139 1429,-139 1429,-103 1531,-103 1531,-139"/>
<text text-anchor="middle" x="1480" y="-117.3" font-family="DejaVu Serif, Liberation Serif, serif" font-size="14.00" fill="white">prometheus</text>
</g>
<g id="edge24" class="edge">
<path fill="none" stroke="white" d="M893,-171C997.99,-171 1023.48,-156.87 1128,-147 1257.86,-134.74 1292.43,-121.68 1418,-121.03"/>
<polygon fill="white" stroke="white" points="1418.01,-124.53 1428,-121 1417.99,-117.53 1418.01,-124.53"/>
<text text-anchor="middle" x="1143.5" y="-150.8" font-family="DejaVu Serif, Liberation Serif, serif" font-size="14.00" fill="white">http</text>
</g>
<g id="node25" class="node">
<polygon fill="none" stroke="white" points="873,-537 741,-537 741,-501 873,-501 873,-537"/>
<text text-anchor="middle" x="807" y="-515.3" font-family="DejaVu Serif, Liberation Serif, serif" font-size="14.00" fill="white">vault-exporter-0</text>
</g>
<g id="node26" class="node">
<polygon fill="none" stroke="white" points="1539.5,-730 1420.5,-730 1420.5,-694 1539.5,-694 1539.5,-730"/>
<text text-anchor="middle" x="1480" y="-708.3" font-family="DejaVu Serif, Liberation Serif, serif" font-size="14.00" fill="white">vault-exporter</text>
</g>
<g id="edge27" class="edge">
<path fill="none" stroke="white" d="M874,-519C1027.79,-519 985.74,-695.57 1128,-754 1140.74,-759.23 1145.27,-755.1 1159,-754 1272.26,-744.91 1300.33,-713.89 1408.94,-712.08"/>
<polygon fill="white" stroke="white" points="1409.03,-715.58 1419,-712 1408.97,-708.58 1409.03,-715.58"/>
<text text-anchor="middle" x="1143.5" y="-759.8" font-family="DejaVu Serif, Liberation Serif, serif" font-size="14.00" fill="white">http</text>
</g>
<g id="node27" class="node">
<polygon fill="none" stroke="white" points="873,-305 741,-305 741,-269 873,-269 873,-305"/>
<text text-anchor="middle" x="807" y="-283.3" font-family="DejaVu Serif, Liberation Serif, serif" font-size="14.00" fill="white">vault-exporter-1</text>
</g>
<g id="node28" class="node">
<polygon fill="none" stroke="white" points="1539.5,-475 1420.5,-475 1420.5,-439 1539.5,-439 1539.5,-475"/>
<text text-anchor="middle" x="1480" y="-453.3" font-family="DejaVu Serif, Liberation Serif, serif" font-size="14.00" fill="white">vault-exporter</text>
</g>
<g id="edge28" class="edge">
<path fill="none" stroke="white" d="M874,-287C1005.68,-287 1033.33,-328.66 1159,-368 1272.26,-403.45 1295.58,-454.04 1408.86,-456.88"/>
<polygon fill="white" stroke="white" points="1408.96,-460.38 1419,-457 1409.04,-453.38 1408.96,-460.38"/>
<text text-anchor="middle" x="1143.5" y="-371.8" font-family="DejaVu Serif, Liberation Serif, serif" font-size="14.00" fill="white">http</text>
</g>
<g id="node29" class="node">
<polygon fill="none" stroke="white" points="873,-247 741,-247 741,-211 873,-211 873,-247"/>
<text text-anchor="middle" x="807" y="-225.3" font-family="DejaVu Serif, Liberation Serif, serif" font-size="14.00" fill="white">vault-exporter-2</text>
</g>
<g id="node30" class="node">
<polygon fill="none" stroke="white" points="1539.5,-278 1420.5,-278 1420.5,-242 1539.5,-242 1539.5,-278"/>
<text text-anchor="middle" x="1480" y="-256.3" font-family="DejaVu Serif, Liberation Serif, serif" font-size="14.00" fill="white">vault-exporter</text>
</g>
<g id="edge29" class="edge">
<path fill="none" stroke="white" d="M874,-229C1003.35,-229 1031.44,-148.55 1159,-170 1276.17,-189.71 1295.66,-256.09 1408.86,-259.83"/>
<polygon fill="white" stroke="white" points="1408.94,-263.34 1419,-260 1409.06,-256.34 1408.94,-263.34"/>
<text text-anchor="middle" x="1143.5" y="-173.8" font-family="DejaVu Serif, Liberation Serif, serif" font-size="14.00" fill="white">http</text>
</g>
<g id="node31" class="node">
<polygon fill="none" stroke="white" points="1547,-614 1413,-614 1413,-578 1547,-578 1547,-614"/>
<text text-anchor="middle" x="1480" y="-592.3" font-family="DejaVu Serif, Liberation Serif, serif" font-size="14.00" fill="white">fluentbit-sidecar</text>
</g>
<g id="node32" class="node">
<polygon fill="none" stroke="white" points="1547,-417 1413,-417 1413,-381 1547,-381 1547,-417"/>
<text text-anchor="middle" x="1480" y="-395.3" font-family="DejaVu Serif, Liberation Serif, serif" font-size="14.00" fill="white">fluentbit-sidecar</text>
</g>
<g id="node33" class="node">
<polygon fill="none" stroke="white" points="1547,-220 1413,-220 1413,-184 1547,-184 1547,-220"/>
<text text-anchor="middle" x="1480" y="-198.3" font-family="DejaVu Serif, Liberation Serif, serif" font-size="14.00" fill="white">fluentbit-sidecar</text>
</g>
<g id="node34" class="node">
<polygon fill="none" stroke="white" points="1542,-81 1418,-81 1418,-45 1542,-45 1542,-81"/>
<text text-anchor="middle" x="1480" y="-59.3" font-family="DejaVu Serif, Liberation Serif, serif" font-size="14.00" fill="white">config-reloader</text>
</g>
</g>
</svg>

</div>
</body>
</html>
